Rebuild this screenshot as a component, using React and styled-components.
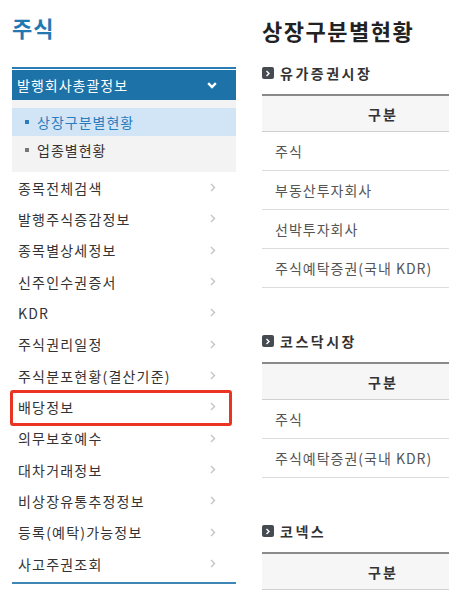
import React from "react";
import styled, { createGlobalStyle } from "styled-components";

const GlobalStyle = createGlobalStyle`
	html, body {
		margin: 0;
		padding: 0;
		background: #fff;
		overflow: hidden;
	}
	body {
		font-family: "Noto Sans CJK KR", "Noto Sans", sans-serif;
		color: #333;
	}
`;

const Page = styled.div`
	width: 449px;
	height: 593px;
	display: flex;
	gap: 26px;
	padding-left: 12px;
	box-sizing: border-box;
	overflow: hidden;
`;

const Sidebar = styled.div`
	width: 224px;
	flex-shrink: 0;
	display: flex;
	flex-direction: column;
`;

const SideTitle = styled.h1`
	margin: 0 0 13px;
	height: 54px;
	line-height: 54px;
	font-size: 22px;
	font-weight: 700;
	letter-spacing: 1px;
	color: #2279b2;
`;

const Group = styled.div`
	border-top: 2px solid #2a7db4;
	padding-top: 1px;
`;

const GroupHeader = styled.div`
	height: 30px;
	background: #1d72a8;
	color: #fff;
	display: flex;
	align-items: center;
	justify-content: space-between;
	padding: 0 19px 0 5px;
	font-size: 14px;
	letter-spacing: 1px;
`;

const SubList = styled.ul`
	list-style: none;
	margin: 0;
	padding: 8px 0;
	background: #f3f3f3;
`;

const SubItem = styled.li`
	height: 28px;
	display: flex;
	align-items: center;
	gap: 8px;
	padding-left: 13px;
	font-size: 14px;
	letter-spacing: 1px;
	background: ${(p) => (p.$active ? "#d2e5f7" : "transparent")};
	color: ${(p) => (p.$active ? "#2b7cbd" : "#333")};
`;

const Bullet = styled.span`
	width: 4px;
	height: 4px;
	background: ${(p) => (p.$active ? "#2b7cbd" : "#777")};
`;

const MenuList = styled.ul`
	list-style: none;
	margin: 0;
	padding: 0 0 3px;
	border-bottom: 2px solid #3d86b5;
`;

const MenuItem = styled.li`
	position: relative;
	height: 31.33px;
	display: flex;
	align-items: center;
	justify-content: space-between;
	padding: 0 20px 0 6px;
	font-size: 14px;
	letter-spacing: 1.2px;
	color: #333;
`;

const Highlight = styled.span`
	position: absolute;
	left: -2px;
	right: 4px;
	top: -1px;
	bottom: -3px;
	border: 3px solid #ea3320;
	border-radius: 3px;
	pointer-events: none;
`;

const Content = styled.div`
	flex-shrink: 0;
	width: 290px;
	display: flex;
	flex-direction: column;
`;

const PageTitle = styled.h2`
	margin: 0 0 1px;
	height: 60px;
	line-height: 60px;
	font-size: 22px;
	font-weight: 700;
	letter-spacing: 1.5px;
	color: #222;
`;

const Section = styled.section`
	margin-bottom: 41px;
`;

const SectionHeading = styled.h3`
	margin: 0 0 9px;
	height: 24px;
	display: flex;
	align-items: center;
	gap: 6px;
	font-size: 14px;
	font-weight: 700;
	letter-spacing: 2.5px;
	color: #333;
`;

const HeadingIcon = styled.span`
	width: 12px;
	height: 12px;
	border-radius: 2px;
	background: #454b51;
	display: flex;
	align-items: center;
	justify-content: center;
`;

const Table = styled.table`
	width: 290px;
	border-collapse: collapse;
	border-top: 2px solid #8a8a8a;
`;

const HeadCell = styled.th`
	width: ${(p) => (p.$wide ? "242px" : "auto")};
	height: 35px;
	padding: 0;
	background: #f6f6f6;
	border-bottom: 1px solid #d0d0d0;
	font-size: 14px;
	font-weight: 700;
	letter-spacing: 2px;
	color: #333;
	text-align: center;
`;

const Cell = styled.td`
	height: 38px;
	padding: 0 0 0 13px;
	border-bottom: 1px solid #ddd;
	font-size: 14px;
	letter-spacing: 1px;
	color: #555;
	white-space: nowrap;
`;

const ChevronRight = () => (
	<svg width="6" height="9" viewBox="0 0 6 9">
		<path d="M1 1l3.5 3.5L1 8" fill="none" stroke="#c4c4c4" strokeWidth="1.4" />
	</svg>
);

const ChevronDown = () => (
	<svg width="10" height="7" viewBox="0 0 10 7">
		<path d="M1.2 1.2L5 5l3.8-3.8" fill="none" stroke="#fff" strokeWidth="2.4" />
	</svg>
);

const IconArrow = () => (
	<svg width="6" height="7" viewBox="0 0 6 7">
		<path d="M1.5 1l2.5 2.5L1.5 6" fill="none" stroke="#fff" strokeWidth="1.4" />
	</svg>
);

const menus = [
	"종목전체검색",
	"발행주식증감정보",
	"종목별상세정보",
	"신주인수권증서",
	"KDR",
	"주식권리일정",
	"주식분포현황(결산기준)",
	"배당정보",
	"의무보호예수",
	"대차거래정보",
	"비상장유통추정정보",
	"등록(예탁)가능정보",
	"사고주권조회",
];

const sections = [
	{ title: "유가증권시장", rows: ["주식", "부동산투자회사", "선박투자회사", "주식예탁증권(국내 KDR)"] },
	{ title: "코스닥시장", rows: ["주식", "주식예탁증권(국내 KDR)"] },
	{ title: "코넥스", rows: [] },
];

export default function App() {
	return (
		<>
			<GlobalStyle />
			<Page>
				<Sidebar>
					<SideTitle>주식</SideTitle>
					<Group>
						<GroupHeader>
							<span>발행회사총괄정보</span>
							<ChevronDown />
						</GroupHeader>
						<SubList>
							<SubItem $active>
								<Bullet $active />
								상장구분별현황
							</SubItem>
							<SubItem>
								<Bullet />
								업종별현황
							</SubItem>
						</SubList>
					</Group>
					<MenuList>
						{menus.map((m) => (
							<MenuItem key={m}>
								<span>{m}</span>
								<ChevronRight />
								{m === "배당정보" && <Highlight />}
							</MenuItem>
						))}
					</MenuList>
				</Sidebar>

				<Content>
					<PageTitle>상장구분별현황</PageTitle>
					{sections.map((s) => (
						<Section key={s.title}>
							<SectionHeading>
								<HeadingIcon>
									<IconArrow />
								</HeadingIcon>
								{s.title}
							</SectionHeading>
							<Table>
								<thead>
									<tr>
										<HeadCell $wide>구분</HeadCell>
										<HeadCell />
									</tr>
								</thead>
								<tbody>
									{s.rows.map((r, i) => (
										<tr key={i}>
											<Cell>{r}</Cell>
											<Cell />
										</tr>
									))}
								</tbody>
							</Table>
						</Section>
					))}
				</Content>
			</Page>
		</>
	);
}
